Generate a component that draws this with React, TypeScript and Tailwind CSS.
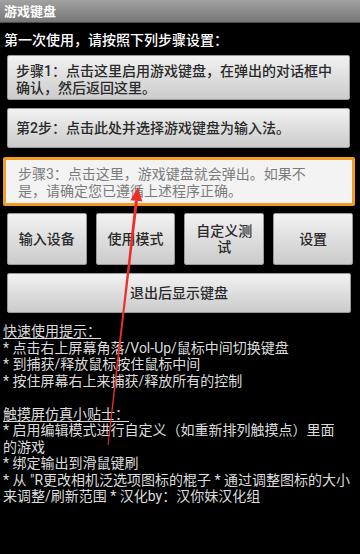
import React from "react";

const font = "font-['Roboto','Noto_Sans_CJK_SC',sans-serif]";

function GrayButton({ className, children }: { className: string; children: React.ReactNode }) {
  return (
    <div
      className={`rounded-[2px] border border-[#9a9a9a] bg-gradient-to-b from-[#f2f2f2] to-[#cbcbcb] text-[14px] font-medium text-[#2a2a2a] ${className}`}
    >
      {children}
    </div>
  );
}

export default function App() {
  return (
    <div className={`relative w-[360px] h-[554px] overflow-hidden bg-black ${font}`}>
      {/* Title bar */}
      <div className="h-[23px] bg-gradient-to-b from-[#a2a2a2] to-[#777777] border-b border-[#4a4a4a] pl-[4px] text-[13px] font-bold leading-[23px] text-white">
        游戏键盘
      </div>

      <div className="mt-[8px] pl-[4px] text-[14px] font-medium leading-[18px] text-white">
        第一次使用，请按照下列步骤设置：
      </div>

      <div className="mt-[6px] flex flex-col">
        <GrayButton className="mx-[7px] w-[343px] h-[45px] pt-[7px] pl-[8px] leading-[17px]">
          步骤1：点击这里启用游戏键盘，在弹出的对话框中
          <br />
          确认，然后返回这里。
        </GrayButton>

        <GrayButton className="mx-[7px] mt-[8px] w-[343px] h-[40px] pl-[8px] flex items-center">
          第2步：点击此处并选择游戏键盘为输入法。
        </GrayButton>

        <div className="mx-[3px] mt-[9px] w-[352px] h-[49px] rounded-[2px] border-[3px] border-[#f29b26] bg-[#f3f3f3] pl-[12px] pt-[6px] text-[14px] leading-[17px] text-[#7c7c7c]">
          步骤3：点击这里，游戏键盘就会弹出。如果不
          <br />
          是，请确定您已遵循上述程序正确。
        </div>

        <div className="mx-[7px] mt-[7px] flex gap-[9px]">
          <GrayButton className="w-[80px] h-[52px] flex items-center justify-center">输入设备</GrayButton>
          <GrayButton className="w-[80px] h-[52px] flex items-center justify-center">使用模式</GrayButton>
          <GrayButton className="w-[80px] h-[52px] flex items-center justify-center text-center leading-[16px] px-[8px]">
            自定义测试
          </GrayButton>
          <GrayButton className="w-[80px] h-[52px] flex items-center justify-center">设置</GrayButton>
        </div>

        <GrayButton className="mx-[7px] mt-[8px] w-[344px] h-[40px] flex items-center justify-center">
          退出后显示键盘
        </GrayButton>
      </div>

      {/* Tips */}
      <div className="mt-[10px] px-[3px] text-[14px] leading-[16.5px] text-[#dcdcdc] whitespace-nowrap">
        <div className="underline underline-offset-2">快速使用提示：</div>
        <div>* 点击右上屏幕角落/Vol-Up/鼠标中间切换键盘</div>
        <div>* 到捕获/释放鼠标按住鼠标中间</div>
        <div>* 按住屏幕右上来捕获/释放所有的控制</div>
        <div className="h-[16.5px]" />
        <div className="underline underline-offset-2">触摸屏仿真小贴士：</div>
        <div>* 启用编辑模式进行自定义（如重新排列触摸点）里面</div>
        <div>的游戏</div>
        <div>* 绑定输出到滑鼠键刷</div>
        <div>* 从 "R更改相机泛选项图标的棍子 * 通过调整图标的大小</div>
        <div>来调整/刷新范围 * 汉化by：汉你妹汉化组</div>
      </div>

      {/* Red annotation arrow */}
      <svg className="absolute left-0 top-0 pointer-events-none" width="360" height="554" viewBox="0 0 360 554">
        <polygon points="138,187 142.3,201.6 130.4,200.2" fill="#ec2f2a" />
        <polygon points="137.9,201.1 134.9,200.7 107.5,444.9 108.5,445.1" fill="#ec2f2a" />
      </svg>
    </div>
  );
}
